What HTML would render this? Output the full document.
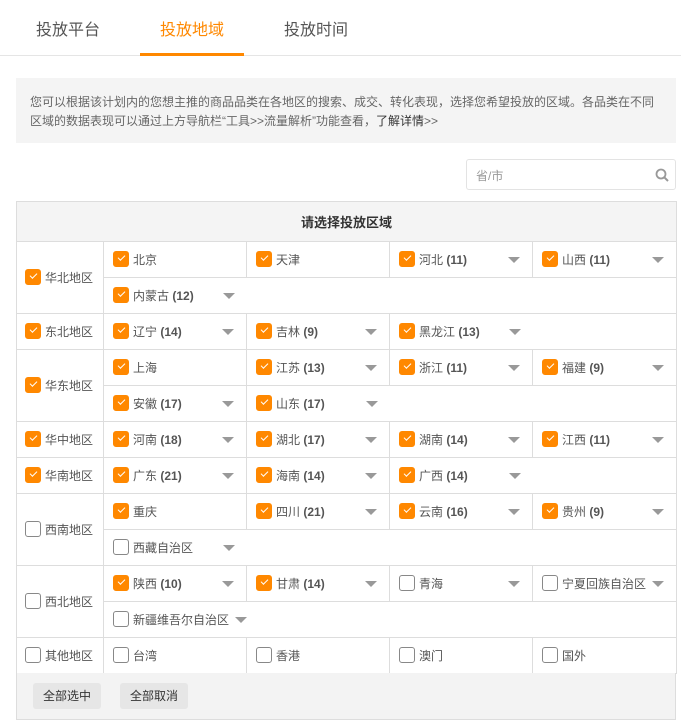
<!DOCTYPE html>
<html><head><meta charset="utf-8"><style>
*{margin:0;padding:0;box-sizing:border-box}
body{width:681px;height:723px;background:#fff;font-family:"Liberation Sans","Noto Sans CJK SC",sans-serif;font-size:12px;color:#555;position:relative;overflow:hidden}
.tabs{position:absolute;left:0;top:0;width:681px;height:56px;border-bottom:1px solid #e5e5e5}
.tab{position:absolute;top:16px;font-size:16px;color:#555}
.tab.on{color:#f80}
.ul{position:absolute;left:140px;top:53px;width:104px;height:3px;background:#f80}
.info{position:absolute;left:16px;top:78px;width:660px;height:65px;background:#f4f4f4;color:#666;padding:15px 14px;line-height:19px;font-size:12px}
.info b{font-weight:normal;color:#333}
.search{position:absolute;left:466px;top:159px;width:210px;height:31px;border:1px solid #e3e3e3;border-radius:3px;color:#999;padding:7px 9px;font-size:12px}
.search svg{position:absolute;right:6px;top:8px}
table{position:absolute;left:16px;top:201px;width:660px;border-collapse:collapse;table-layout:fixed}
td{border:1px solid #ddd;height:36px;padding:0 0 0 9px;position:relative;white-space:nowrap;color:#555}
th{height:40px;background:#f4f4f4;border:1px solid #ddd;font-size:13px;color:#333;font-weight:bold}
td.r{padding-left:8px}
.cb{display:inline-block;width:16px;height:16px;border-radius:3px;vertical-align:middle;margin-right:4px;position:relative;top:-1px;border:1px solid #888;background:#fff}
.cb.c{background:#f80;border-color:#f80}
.cb.c:after{content:"";position:absolute;left:4px;top:3px;width:6px;height:3px;border-left:1.5px solid #fff;border-bottom:1.5px solid #fff;transform:rotate(-45deg)}
td b{color:#555}
.ar{position:absolute;right:12px;top:15px;width:0;height:0;border-left:6px solid transparent;border-right:6px solid transparent;border-top:6px solid #999}
.ar.i{position:static;display:inline-block;margin-left:6px;vertical-align:middle}
.foot{position:absolute;left:16px;top:673px;width:660px;height:47px;background:#f3f3f3;border:1px solid #ddd;border-top:none}
.btn{position:absolute;top:10px;height:26px;width:68px;background:#e6e6e6;border-radius:3px;color:#333;text-align:center;line-height:26px;font-size:12px}
</style></head><body>
<div class="tabs">
<div class="tab" style="left:36px">投放平台</div>
<div class="tab on" style="left:160px">投放地域</div>
<div class="tab" style="left:284px">投放时间</div>
<div class="ul"></div>
</div>
<div class="info">您可以根据该计划内的您想主推的商品品类在各地区的搜索、成交、转化表现，选择您希望投放的区域。各品类在不同区域的数据表现可以通过上方导航栏“工具&gt;&gt;流量解析”功能查看，<b>了解详情</b>&gt;&gt;</div>
<div class="search">省/市<svg width="14" height="14" viewBox="0 0 14 14"><circle cx="6" cy="6" r="4.5" fill="none" stroke="#999" stroke-width="1.8"/><path d="M9.3 9.3L13 13" stroke="#999" stroke-width="2"/></svg></div>
<table>
<colgroup><col style="width:87px"><col style="width:143px"><col style="width:143px"><col style="width:143px"><col style="width:144px"></colgroup>
<tr><th colspan="5">请选择投放区域</th></tr>
<tr><td class="r" rowspan="2"><span class="cb c"></span>华北地区</td><td><span class="cb c"></span>北京</td><td><span class="cb c"></span>天津</td><td><span class="cb c"></span>河北 <b>(11)</b><i class="ar"></i></td><td><span class="cb c"></span>山西 <b>(11)</b><i class="ar"></i></td></tr>
<tr><td colspan="4"><span class="cb c"></span>内蒙古 <b>(12)</b><i class="ar" style="left:119px"></i></td></tr>
<tr><td class="r"><span class="cb c"></span>东北地区</td><td><span class="cb c"></span>辽宁 <b>(14)</b><i class="ar"></i></td><td><span class="cb c"></span>吉林 <b>(9)</b><i class="ar"></i></td><td colspan="2"><span class="cb c"></span>黑龙江 <b>(13)</b><i class="ar" style="left:119px"></i></td></tr>
<tr><td class="r" rowspan="2"><span class="cb c"></span>华东地区</td><td><span class="cb c"></span>上海</td><td><span class="cb c"></span>江苏 <b>(13)</b><i class="ar"></i></td><td><span class="cb c"></span>浙江 <b>(11)</b><i class="ar"></i></td><td><span class="cb c"></span>福建 <b>(9)</b><i class="ar"></i></td></tr>
<tr><td><span class="cb c"></span>安徽 <b>(17)</b><i class="ar"></i></td><td colspan="3"><span class="cb c"></span>山东 <b>(17)</b><i class="ar" style="left:119px"></i></td></tr>
<tr><td class="r"><span class="cb c"></span>华中地区</td><td><span class="cb c"></span>河南 <b>(18)</b><i class="ar"></i></td><td><span class="cb c"></span>湖北 <b>(17)</b><i class="ar"></i></td><td><span class="cb c"></span>湖南 <b>(14)</b><i class="ar"></i></td><td><span class="cb c"></span>江西 <b>(11)</b><i class="ar"></i></td></tr>
<tr><td class="r"><span class="cb c"></span>华南地区</td><td><span class="cb c"></span>广东 <b>(21)</b><i class="ar"></i></td><td><span class="cb c"></span>海南 <b>(14)</b><i class="ar"></i></td><td colspan="2"><span class="cb c"></span>广西 <b>(14)</b><i class="ar" style="left:119px"></i></td></tr>
<tr><td class="r" rowspan="2"><span class="cb"></span>西南地区</td><td><span class="cb c"></span>重庆</td><td><span class="cb c"></span>四川 <b>(21)</b><i class="ar"></i></td><td><span class="cb c"></span>云南 <b>(16)</b><i class="ar"></i></td><td><span class="cb c"></span>贵州 <b>(9)</b><i class="ar"></i></td></tr>
<tr><td colspan="4"><span class="cb"></span>西藏自治区<i class="ar" style="left:119px"></i></td></tr>
<tr><td class="r" rowspan="2"><span class="cb"></span>西北地区</td><td><span class="cb c"></span>陕西 <b>(10)</b><i class="ar"></i></td><td><span class="cb c"></span>甘肃 <b>(14)</b><i class="ar"></i></td><td><span class="cb"></span>青海<i class="ar"></i></td><td><span class="cb"></span>宁夏回族自治区<i class="ar i"></i></td></tr>
<tr><td colspan="4"><span class="cb"></span>新疆维吾尔自治区<i class="ar i"></i></td></tr>
<tr><td class="r"><span class="cb"></span>其他地区</td><td><span class="cb"></span>台湾</td><td><span class="cb"></span>香港</td><td><span class="cb"></span>澳门</td><td><span class="cb"></span>国外</td></tr>
</table>
<div class="foot"><div class="btn" style="left:16px">全部选中</div><div class="btn" style="left:103px">全部取消</div></div>
</body></html>
